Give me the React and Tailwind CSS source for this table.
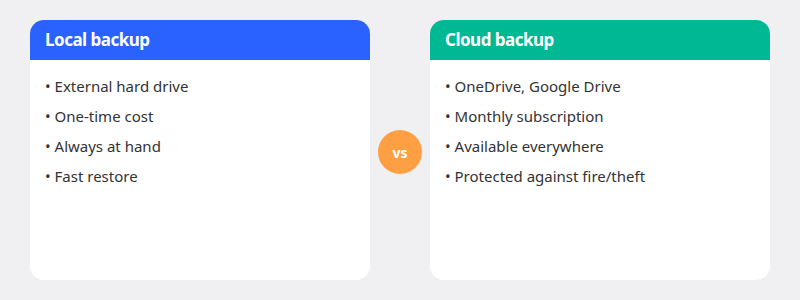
const CARDS = [
  {
    title: "Local backup",
    header: "bg-[#2962ff]",
    items: ["External hard drive", "One-time cost", "Always at hand", "Fast restore"],
  },
  {
    title: "Cloud backup",
    header: "bg-[#00b894]",
    items: ["OneDrive, Google Drive", "Monthly subscription", "Available everywhere", "Protected against fire/theft"],
  },
]

const Card = ({ card }) => (
  <div className="w-[340px] h-[260px] bg-white rounded-[14px] overflow-hidden flex flex-col">
    <div className={`${card.header} h-[40px] flex items-center px-[15px]`}>
      <h2 className="text-white text-[17px] font-bold tracking-[-0.5px]">{card.title}</h2>
    </div>
    <ul className="pt-[11px] px-[15px]">
      {card.items.map((item) => (
        <li key={item} className="text-[15px] leading-[30px] text-[#333]">
          • {item}
        </li>
      ))}
    </ul>
  </div>
)

export default function App() {
  return (
    <div
      className="w-[800px] h-[300px] bg-[#f0f0f2] flex items-center justify-center gap-[8px]"
      style={{ fontFamily: '"Noto Sans", "Open Sans", sans-serif' }}
    >
      <Card card={CARDS[0]} />
      <div className="w-[44px] h-[44px] mt-[4px] rounded-full bg-[#ff9f43] flex items-center justify-center">
        <span className="text-white text-[14px] font-bold">vs</span>
      </div>
      <Card card={CARDS[1]} />
    </div>
  )
}
